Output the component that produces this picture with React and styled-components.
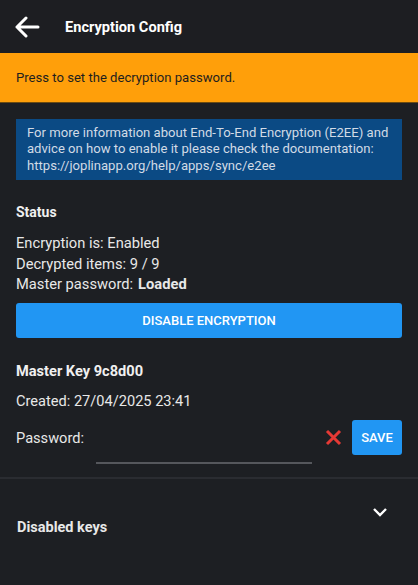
import React from 'react'
import styled, { createGlobalStyle } from 'styled-components'

const Global = createGlobalStyle`
  html, body { margin: 0; padding: 0; background: #1d1f23; }
  body { font-family: Roboto, "Noto Sans", sans-serif; }
`

const Page = styled.div`
  width: 418px;
  height: 585px;
  overflow: hidden;
  background: #1d1f23;
  color: #e8e8e8;
  display: flex;
  flex-direction: column;
`

const Header = styled.div`
  height: 53px;
  display: flex;
  align-items: center;
  padding: 0 0 0 14px;
  background: #1d1e22;
`

const BackButton = styled.div`
  width: 26px;
  height: 26px;
  display: flex;
  align-items: center;
  justify-content: center;
  margin-right: 25px;
`

const Title = styled.div`
  font-size: 14.6px;
  font-weight: 700;
  color: #ffffff;
`

const Banner = styled.div`
  height: 49px;
  background: #ff9f0a;
  color: #1e1e1e;
  font-size: 13.1px;
  display: flex;
  align-items: center;
  padding: 0 16px;
  border-bottom: 1px solid #6b4b12;
`

const Content = styled.div`
  padding: 16px 16px 0;
  display: flex;
  flex-direction: column;
`

const InfoBox = styled.div`
  background: #0b4a84;
  color: #d2dbe6;
  font-size: 13.1px;
  line-height: 16.4px;
  padding: 6px 11px 6px;
`

const SectionTitle = styled.div`
  font-size: ${p => p.size || 14}px;
  font-weight: 700;
  color: #f0f0f0;
  margin-top: ${p => p.top}px;
`

const Lines = styled.div`
  margin-top: 13px;
  font-size: 14.7px;
  line-height: 20.5px;
`

const Bold = styled.span`
  font-weight: 700;
  margin-left: 5px;
`

const PrimaryButton = styled.div`
  margin-top: 8px;
  height: 35px;
  border-radius: 3px;
  background: #2196f3;
  color: #ffffff;
  font-size: 13px;
  font-weight: 500;
  display: flex;
  align-items: center;
  justify-content: center;
`

const Text = styled.div`
  font-size: 14.6px;
  margin-top: ${p => p.top}px;
`

const PasswordRow = styled.div`
  display: flex;
  align-items: center;
  margin-top: 10px;
  height: 36px;
`

const Label = styled.span`
  font-size: 14.6px;
`

const Field = styled.div`
  flex: 1;
  align-self: stretch;
  position: relative;
`

const Underline = styled.div`
  position: absolute;
  left: 12px;
  right: 12px;
  bottom: -8px;
  height: 2px;
  background: #55575c;
`

const IconButton = styled.div`
  width: 18px;
  height: 18px;
  margin-right: 10px;
  display: flex;
  align-items: center;
  justify-content: center;
`

const SaveButton = styled.div`
  width: 50px;
  height: 35px;
  border-radius: 3px;
  background: #2196f3;
  color: #fff;
  font-size: 13px;
  font-weight: 500;
  display: flex;
  align-items: center;
  justify-content: center;
`

const Divider = styled.div`
  height: 2px;
  background: #2a2c31;
  margin-top: 21px;
`

const Accordion = styled.div`
  display: flex;
  justify-content: space-between;
  padding: 28px 30px 0 17px;
`

const AccordionTitle = styled.div`
  font-size: 14.5px;
  font-weight: 700;
  margin-top: 12px;
  color: #e8e8e8;
`

export default function App() {
  return (
    <Page>
      <Global />
      <Header>
        <BackButton>
          <svg width="26" height="22" viewBox="0 0 26 22">
            <path d="M24 11H3M12 2L3 11l9 9" stroke="#fff" strokeWidth="3" fill="none" strokeLinecap="round" strokeLinejoin="round" />
          </svg>
        </BackButton>
        <Title>Encryption Config</Title>
      </Header>
      <Banner>Press to set the decryption password.</Banner>
      <Content>
        <InfoBox>
          For more information about End-To-End Encryption (E2EE) and advice on how to enable it please check the documentation: https://joplinapp.org/help/apps/sync/e2ee
        </InfoBox>
        <SectionTitle top={24}>Status</SectionTitle>
        <Lines>
          <div>Encryption is: Enabled</div>
          <div>Decrypted items: 9 / 9</div>
          <div>Master password:<Bold>Loaded</Bold></div>
        </Lines>
        <PrimaryButton>DISABLE ENCRYPTION</PrimaryButton>
        <SectionTitle top={24} size={14.6}>Master Key 9c8d00</SectionTitle>
        <Text top={12}>Created: 27/04/2025 23:41</Text>
        <PasswordRow>
          <Label>Password:</Label>
          <Field><Underline /></Field>
          <IconButton>
            <svg width="17" height="17" viewBox="0 0 17 17">
              <path d="M2 2L15 15M15 2L2 15" stroke="#e53935" strokeWidth="3" />
            </svg>
          </IconButton>
          <SaveButton>SAVE</SaveButton>
        </PasswordRow>
      </Content>
      <Divider />
      <Accordion>
        <AccordionTitle>Disabled keys</AccordionTitle>
        <svg width="16" height="10" viewBox="0 0 16 10">
          <path d="M2 2l6 6 6-6" stroke="#fff" strokeWidth="2.4" fill="none" />
        </svg>
      </Accordion>
    </Page>
  )
}
